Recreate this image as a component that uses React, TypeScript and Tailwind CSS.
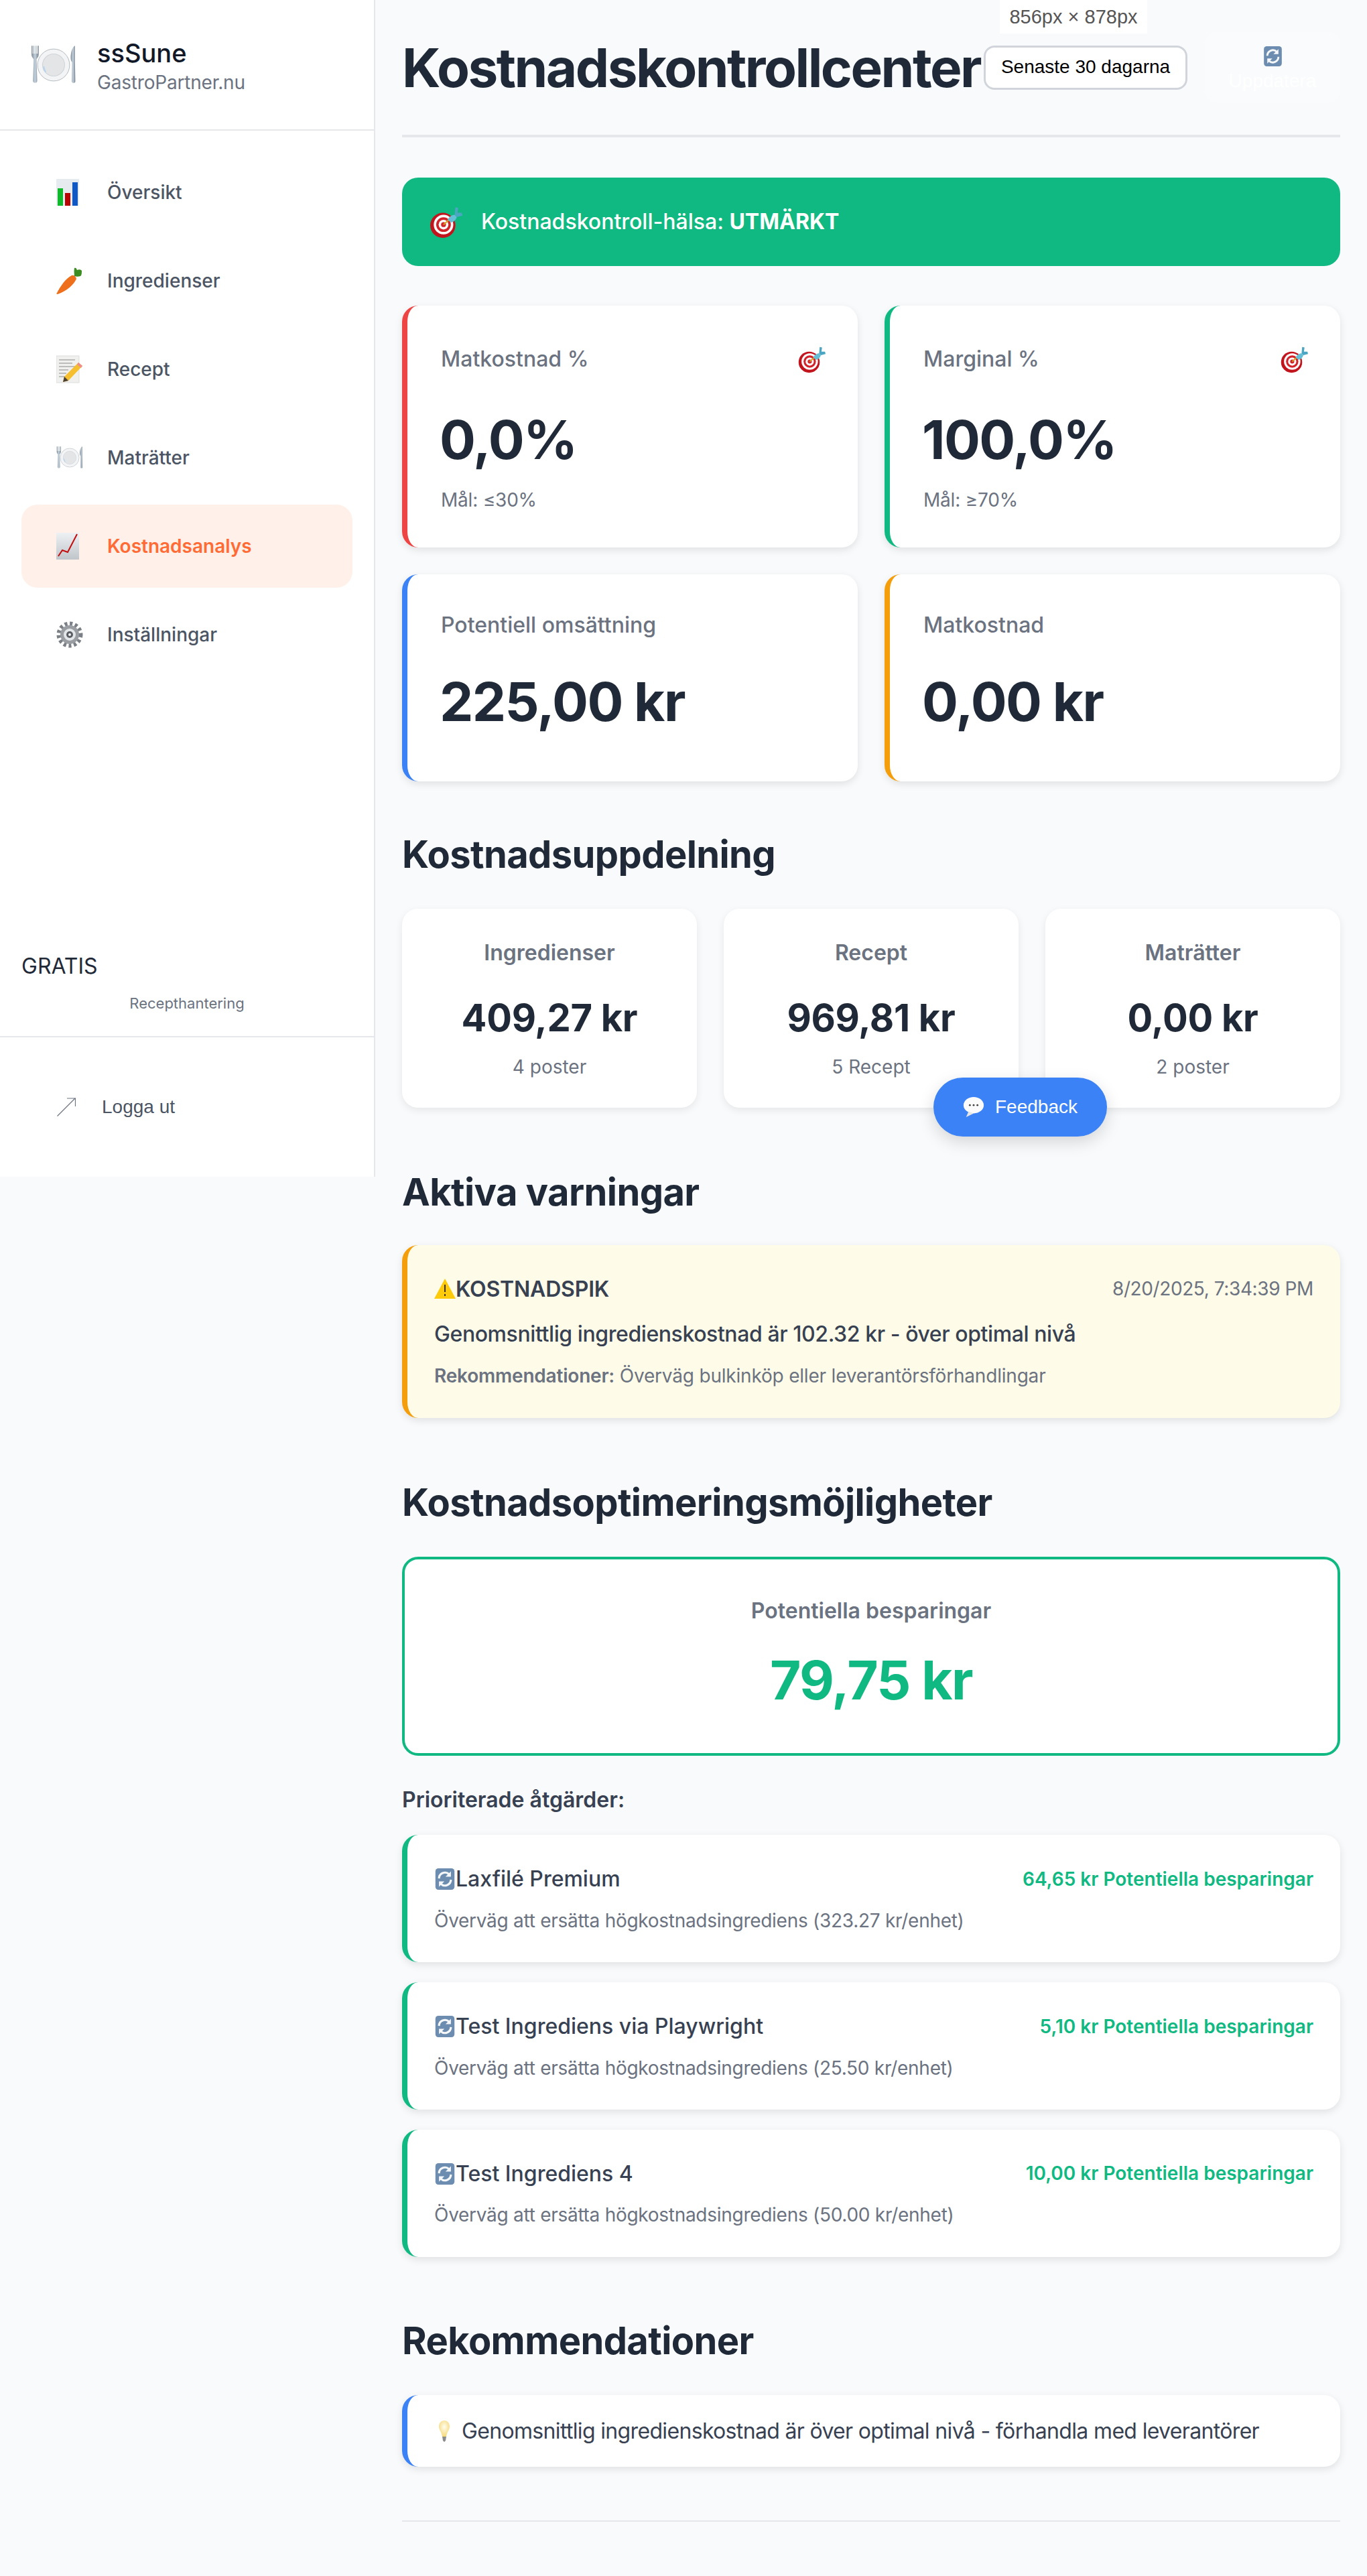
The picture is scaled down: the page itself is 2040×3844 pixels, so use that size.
import type { ReactNode } from 'react'

// emoji-style icons, the font set here has no colour emoji
function PlateIcon({ className }: { className: string }) {
  return (
    <svg viewBox="0 0 64 56" className={className}>
      <defs>
        <linearGradient id="metal" x1="0" y1="0" x2="1" y2="0">
          <stop offset="0" stopColor="#7f8b96" />
          <stop offset="0.5" stopColor="#c4d2de" />
          <stop offset="1" stopColor="#76828c" />
        </linearGradient>
      </defs>
      <path d="M1 1v12c0 4 2 5 3 7l-1 30c0 4 6 4 6 0L8 20c1-2 3-3 3-7V1h-1.500v11H8V1H6.500v11H5V1H3.500v11H2.500V1z" fill="url(#metal)" />
      <circle cx="32" cy="28" r="22.500" fill="#f3f4f5" stroke="#a9afb4" strokeWidth="0.800" />
      <circle cx="32" cy="28" r="15.500" fill="#e4e5e6" stroke="#cfd4d8" strokeWidth="1" />
      <path d="M21 38a15 15 0 0 1-3-8" stroke="#b9d3ec" strokeWidth="2" fill="none" />
      <path d="M62 1c-4 2-6 9-6 17 0 3 1 5 2 6l-.500 27c0 3 5 3 5 0L62 24z" fill="url(#metal)" />
    </svg>
  )
}

function BarsIcon() {
  return (
    <svg viewBox="0 0 34 40" className="w-[34px] h-[40px]">
      <rect width="34" height="40" fill="#e6ebf0" />
      <rect x="2" y="14" width="8" height="26" fill="#10b82c" />
      <rect x="13" y="21" width="8" height="19" fill="#b90404" />
      <rect x="24" y="5" width="8" height="35" fill="#1258c4" />
    </svg>
  )
}

function CarrotIcon() {
  return (
    <svg viewBox="0 0 38 42" className="w-[38px] h-[42px]">
      <path d="M23 13c3-1 6 1 7 5-3 8-14 18-28 23-2 0-2-1-1-2 5-9 12-21 22-26z" fill="#ee6f1c" />
      <path d="M27 14c0-3-1-7 0-12 2-1 3 0 4 3 2-1 6-1 7 1 0 3 0 7-2 8-3 1-6 1-9 0z" fill="#3d8e22" />
    </svg>
  )
}

function MemoIcon() {
  return (
    <svg viewBox="0 0 40 42" className="w-[40px] h-[42px]">
      <rect x="0" y="1" width="34" height="40" fill="#f0f0ee" stroke="#d8d8d6" strokeWidth="0.800" />
      <path d="M4 7h24M4 12h20M4 17h24M4 22h14M4 27h11M4 32h10" stroke="#8a8a88" strokeWidth="1.200" />
      <path d="M33 11l6 5-21 22-8 2 2-8z" fill="#f5bf2f" />
      <path d="M33 11l6 5-2 3-6-5z" fill="#ec8c8c" />
      <path d="M12 32l-2 8 8-2z" fill="#4b4036" />
    </svg>
  )
}

function TrendIcon() {
  return (
    <svg viewBox="0 0 34 40" className="w-[34px] h-[40px]">
      <defs>
        <linearGradient id="sheet" x1="0" y1="0" x2="0" y2="1">
          <stop offset="0" stopColor="#eef1f4" />
          <stop offset="1" stopColor="#bfc5ca" />
        </linearGradient>
      </defs>
      <rect width="34" height="40" fill="url(#sheet)" />
      <path d="M3 35l6-9 8 3L31 2" stroke="#c40d0d" strokeWidth="2" fill="none" />
    </svg>
  )
}

function GearIcon({ className }: { className: string }) {
  return (
    <svg viewBox="0 0 40 40" className={className}>
      <circle cx="20" cy="20" r="16" fill="none" stroke="#7b8086" strokeWidth="7" strokeDasharray="4 3.500" />
      <circle cx="20" cy="20" r="14" fill="#9a9ea3" />
      <circle cx="20" cy="20" r="9" fill="#e3e6e9" />
      <circle cx="20" cy="20" r="5" fill="#5a5f65" />
      <circle cx="20" cy="20" r="2" fill="#f1f3f4" />
    </svg>
  )
}

function TargetIcon({ className }: { className: string }) {
  return (
    <svg viewBox="0 0 48 48" className={className}>
      <circle cx="20" cy="29" r="18" fill="#c2141c" />
      <circle cx="21" cy="28" r="14" fill="#fbfbfb" />
      <circle cx="21" cy="28" r="10.500" fill="#d2232a" />
      <circle cx="21" cy="28" r="7" fill="#fbfbfb" />
      <circle cx="21" cy="28" r="3.500" fill="#d2232a" />
      <path d="M21 28l9-8" stroke="#d6a21f" strokeWidth="2" />
      <path d="M27 21c2-4 6-7 10-7l3 3c-1 4-4 7-8 8z" fill="#64bfd6" />
      <path d="M37 14l1-11 4 1-1 7 6 0 1 4-8 2z" fill="#4ba6c4" />
    </svg>
  )
}

function RefreshIcon({ className }: { className: string }) {
  return (
    <svg viewBox="0 0 32 36" className={className}>
      <rect width="32" height="36" rx="5" fill="#6d8db0" />
      <path d="M6 17a10 10 0 0 1 17-7" stroke="#f5f7f9" strokeWidth="3.500" fill="none" />
      <path d="M26 5v9h-9z" fill="#f5f7f9" />
      <path d="M26 19a10 10 0 0 1-17 7" stroke="#f5f7f9" strokeWidth="3.500" fill="none" />
      <path d="M6 31v-9h9z" fill="#f5f7f9" />
    </svg>
  )
}

function WarningIcon() {
  return (
    <svg viewBox="0 0 32 30" className="w-[32px] h-[30px] shrink-0">
      <path d="M16 0L32 30H0z" fill="#fdcb0a" />
      <rect x="15" y="9" width="2" height="11" fill="#3a3000" />
      <rect x="15" y="23" width="2" height="3" fill="#3a3000" />
    </svg>
  )
}

function BulbIcon() {
  return (
    <svg viewBox="0 0 22 32" className="w-[22px] h-[32px] shrink-0">
      <defs>
        <radialGradient id="bulb" cx="0.500" cy="0.400" r="0.600">
          <stop offset="0" stopColor="#fffdf0" />
          <stop offset="1" stopColor="#f6d978" />
        </radialGradient>
      </defs>
      <path d="M11 0c5 0 8 4 8 9 0 5-4 8-5 15H8C7 17 3 14 3 9c0-5 3-9 8-9z" fill="url(#bulb)" />
      <path d="M8 24h6l-1 6-2 2-2-2z" fill="#8b8b8b" />
    </svg>
  )
}

function ChatIcon() {
  return (
    <svg viewBox="0 0 34 34" className="w-[32px] h-[32px]">
      <ellipse cx="17" cy="14" rx="16" ry="13" fill="#fbfbfb" />
      <path d="M9 24l-4 9 12-6z" fill="#e6e6e6" />
      <circle cx="11" cy="14" r="1.500" fill="#444" />
      <circle cx="17" cy="14" r="1.500" fill="#444" />
      <circle cx="23" cy="14" r="1.500" fill="#444" />
    </svg>
  )
}

const NAV_ITEMS: { label: string; icon: ReactNode; active?: boolean }[] = [
  { label: 'Översikt', icon: <BarsIcon /> },
  { label: 'Ingredienser', icon: <CarrotIcon /> },
  { label: 'Recept', icon: <MemoIcon /> },
  { label: 'Maträtter', icon: <PlateIcon className="w-[40px] h-[36px]" /> },
  { label: 'Kostnadsanalys', icon: <TrendIcon />, active: true },
  { label: 'Inställningar', icon: <GearIcon className="w-[40px] h-[40px]" /> },
]

function Sidebar() {
  return (
    <aside className="w-[560px] h-[1756px] shrink-0 bg-white border-r-2 border-[#e5e7eb] flex flex-col">
      <div className="h-[195px] shrink-0 border-b-2 border-[#e5e7eb] flex items-center pl-[46px] gap-[31px]">
        <PlateIcon className="w-[68px] h-[60px]" />
        <div className="mt-1">
          <div className="text-[38px] font-medium text-[#111827] leading-[48px]">ssSune</div>
          <div className="text-[28px] text-[#6b7280] leading-[40px] tracking-[-0.2px]">GastroPartner.nu</div>
        </div>
      </div>
      <nav className="flex-1 pt-[30px] px-8 flex flex-col gap-2">
        {NAV_ITEMS.map((item) => (
          <a
            key={item.label}
            className={`h-[124px] rounded-3xl flex items-center pl-[52px] text-[28px] ${
              item.active ? 'bg-[#fff0e9] text-[#ff6b35] font-semibold' : 'text-[#4b5563] font-medium'
            }`}
          >
            <span className="w-[76px] flex items-center">{item.icon}</span>
            {item.label}
          </a>
        ))}
      </nav>
      <div className="px-8 pb-[31px]">
        <div className="text-[32px] text-[#1f2937] leading-[51px]">GRATIS</div>
        <div className="mt-[13px] text-center text-[22px] text-[#6b7280] leading-[35px]">Recepthantering</div>
      </div>
      <div className="h-[210px] shrink-0 border-t-2 border-[#e5e7eb] flex items-center pl-[85px] font-['Liberation_Sans',sans-serif] text-[28px] text-[#4b5563]">
        <svg viewBox="0 0 28 28" className="w-[28px] h-[28px] mr-[39px]" fill="none" stroke="#6b7280" strokeWidth="1.200">
          <path d="M0.500 27.500L27.500 0.500M15 1h12.500v12" />
        </svg>
        Logga ut
      </div>
    </aside>
  )
}

function KpiCard({
  label,
  value,
  note,
  border,
  target,
}: {
  label: string
  value: string
  note?: string
  border: string
  target?: boolean
}) {
  return (
    <div className={`bg-white rounded-3xl border-l-8 shadow-[0_4px_12px_rgba(0,0,0,0.1)] px-12 pt-12 ${note ? 'pb-12' : 'pb-[55px]'} ${border}`}>
      <div className={`flex justify-between items-center ${note ? 'h-16 mb-6' : 'h-[56px] mb-[22px]'}`}>
        <span className="text-[32px] font-medium text-[#6b7280] pl-[2px]">{label}</span>
        {target && <TargetIcon className="w-[42px] h-[42px]" />}
      </div>
      <div className={`text-[80px] font-bold text-[#1f2937] leading-[128px] tracking-[-1.6px] ${note ? 'mb-1' : ''}`}>{value}</div>
      {note && <div className="text-[28px] text-[#6b7280] pl-[2px] tracking-[-0.2px]">{note}</div>}
    </div>
  )
}

function BreakdownCard({ label, value, note }: { label: string; value: string; note: string }) {
  return (
    <div className="bg-white rounded-3xl shadow-[0_4px_12px_rgba(0,0,0,0.08)] pt-10 pb-[38px] text-center">
      <div className="text-[32px] font-semibold text-[#6b7280] mb-[27px]">{label}</div>
      <div className="text-[56px] font-bold text-[#1f2937] leading-[90px] mb-[6px] tracking-[-0.3px]">{value}</div>
      <div className="text-[28px] text-[#6b7280]">{note}</div>
    </div>
  )
}

const ACTIONS = [
  { name: 'Laxfilé Premium', saving: '64,65 kr', price: '323.27' },
  { name: 'Test Ingrediens via Playwright', saving: '5,10 kr', price: '25.50' },
  { name: 'Test Ingrediens 4', saving: '10,00 kr', price: '50.00' },
]

function Main() {
  return (
    <main className="flex-1 min-w-0 px-10">
      <header className="flex items-center justify-between pt-12 pb-12 border-b-4 border-[#e5e7eb] mb-[60px]">
        <h1 className="text-[80px] font-bold text-[#1f2937] leading-[105px] whitespace-nowrap tracking-[-2.5px]">Kostnadskontrollcenter</h1>
        <div className="flex items-center gap-[26px] font-['Liberation_Sans',sans-serif]">
          <div className="h-[66px] w-[304px] bg-white border-[3px] border-[#d1d5db] rounded-2xl flex items-center justify-center text-[28px] text-black">
            Senaste 30 dagarna
          </div>
          <button className="w-[202px] h-[105px] bg-[#fafbfd] rounded-2xl flex flex-col items-center text-[28px] text-white leading-[40px] pt-[21px]">
            <RefreshIcon className="w-[29px] h-[30px]" />
            <span className="mt-[2px]">Uppdatera</span>
          </button>
        </div>
      </header>

      <div className="h-[132px] bg-[#10b981] rounded-3xl flex items-center pl-10 text-[32px] font-medium text-white mb-[59px]">
        <TargetIcon className="w-[50px] h-[50px] mr-[28px]" />
        <span>
          Kostnadskontroll-hälsa: <strong className="font-bold">UTMÄRKT</strong>
        </span>
      </div>

      <div className="grid grid-cols-2 gap-10">
        <KpiCard label="Matkostnad %" value="0,0%" note="Mål: ≤30%" border="border-[#ef4444]" target />
        <KpiCard label="Marginal %" value="100,0%" note="Mål: ≥70%" border="border-[#10b981]" target />
        <KpiCard label="Potentiell omsättning" value="225,00 kr" border="border-[#3b82f6]" />
        <KpiCard label="Matkostnad" value="0,00 kr" border="border-[#f59e0b]" />
      </div>

      <h2 className="mt-16 mb-9 text-[56px] font-bold text-[#1f2937] leading-[90px] tracking-[-0.6px]">Kostnadsuppdelning</h2>
      <div className="grid grid-cols-3 gap-10">
        <BreakdownCard label="Ingredienser" value="409,27 kr" note="4 poster" />
        <BreakdownCard label="Recept" value="969,81 kr" note="5 Recept" />
        <BreakdownCard label="Maträtter" value="0,00 kr" note="2 poster" />
      </div>

      <h2 className="mt-[81px] mb-[34px] text-[56px] font-bold text-[#1f2937] leading-[90px] tracking-[-0.6px]">Aktiva varningar</h2>
      <div className="bg-[#fefbe8] rounded-3xl border-l-8 border-[#f59e0b] shadow-[0_4px_12px_rgba(0,0,0,0.1)] p-10">
        <div className="flex justify-between items-center mb-4">
          <span className="flex items-center text-[32px] font-semibold text-[#374151] tracking-[-0.2px]">
            <WarningIcon />
            KOSTNADSPIK
          </span>
          <span className="text-[28px] text-[#6b7280] tracking-[-0.4px]">8/20/2025, 7:34:39 PM</span>
        </div>
        <p className="text-[32px] font-medium text-[#374151] mb-[15px] tracking-[-0.42px]">Genomsnittlig ingredienskostnad är 102.32 kr - över optimal nivå</p>
        <p className="text-[28px] text-[#6b7280] tracking-[-0.2px]">
          <strong className="font-semibold">Rekommendationer:</strong> Överväg bulkinköp eller leverantörsförhandlingar
        </p>
      </div>

      <h2 className="mt-[81px] mb-[36px] text-[56px] font-bold text-[#1f2937] leading-[90px] tracking-[-0.6px]">Kostnadsoptimeringsmöjligheter</h2>
      <div className="bg-white rounded-3xl border-4 border-[#10b981] pt-[51px] pb-[45px] text-center">
        <div className="text-[32px] font-semibold text-[#6b7280] mb-[14px]">Potentiella besparingar</div>
        <div className="text-[80px] font-bold text-[#10b981] leading-[128px] tracking-[-1.6px]">79,75 kr</div>
      </div>

      <h4 className="mt-10 mb-[27px] text-[32px] font-semibold text-[#374151]">Prioriterade åtgärder:</h4>
      <div className="flex flex-col gap-[30px]">
        {ACTIONS.map((action) => (
          <div key={action.name} className="bg-white rounded-3xl border-l-8 border-[#10b981] shadow-[0_4px_12px_rgba(0,0,0,0.1)] p-10">
            <div className="flex justify-between items-center mb-[14px]">
              <span className="flex items-center text-[32px] font-medium text-[#374151]">
                <RefreshIcon className="w-[32px] h-[32px] shrink-0" />
                {action.name}
              </span>
              <span className="text-[28px] font-semibold text-[#10b981]">{action.saving} Potentiella besparingar</span>
            </div>
            <p className="text-[28px] text-[#6b7280] tracking-[-0.28px]">Överväg att ersätta högkostnadsingrediens ({action.price} kr/enhet)</p>
          </div>
        ))}
      </div>

      <h2 className="mt-20 mb-9 text-[56px] font-bold text-[#1f2937] leading-[90px] tracking-[-0.6px]">Rekommendationer</h2>
      <div className="bg-white rounded-3xl border-l-8 border-[#3b82f6] shadow-[0_4px_12px_rgba(0,0,0,0.1)] px-10 py-7 flex items-center text-[32px] text-[#374151] tracking-[-0.66px]">
        <span className="w-[41px] pl-1">
          <BulbIcon />
        </span>
        Genomsnittlig ingredienskostnad är över optimal nivå - förhandla med leverantörer
      </div>

      <div className="mt-20 mb-20 border-t-2 border-[#e5e7eb]" />
    </main>
  )
}

export default function App() {
  return (
    <div className="relative min-h-[3844px] bg-[#f9fafb] font-['Inter',sans-serif] leading-[1.6] antialiased flex items-start">
      <Sidebar />
      <Main />
      <div className="absolute left-[1492px] top-0 w-[220px] h-[50px] bg-white flex items-center justify-center font-['Liberation_Sans',sans-serif] text-[29px] text-[#555]">
        856px × 878px
      </div>
      <button className="absolute left-[1393px] top-[1608px] w-[259px] h-[88px] rounded-full bg-[#3b82f6] text-white shadow-[0_8px_24px_rgba(0,0,0,0.15)] flex items-center justify-center gap-[16px] font-['Liberation_Sans',sans-serif] text-[28px]">
        <ChatIcon />
        Feedback
      </button>
    </div>
  )
}
